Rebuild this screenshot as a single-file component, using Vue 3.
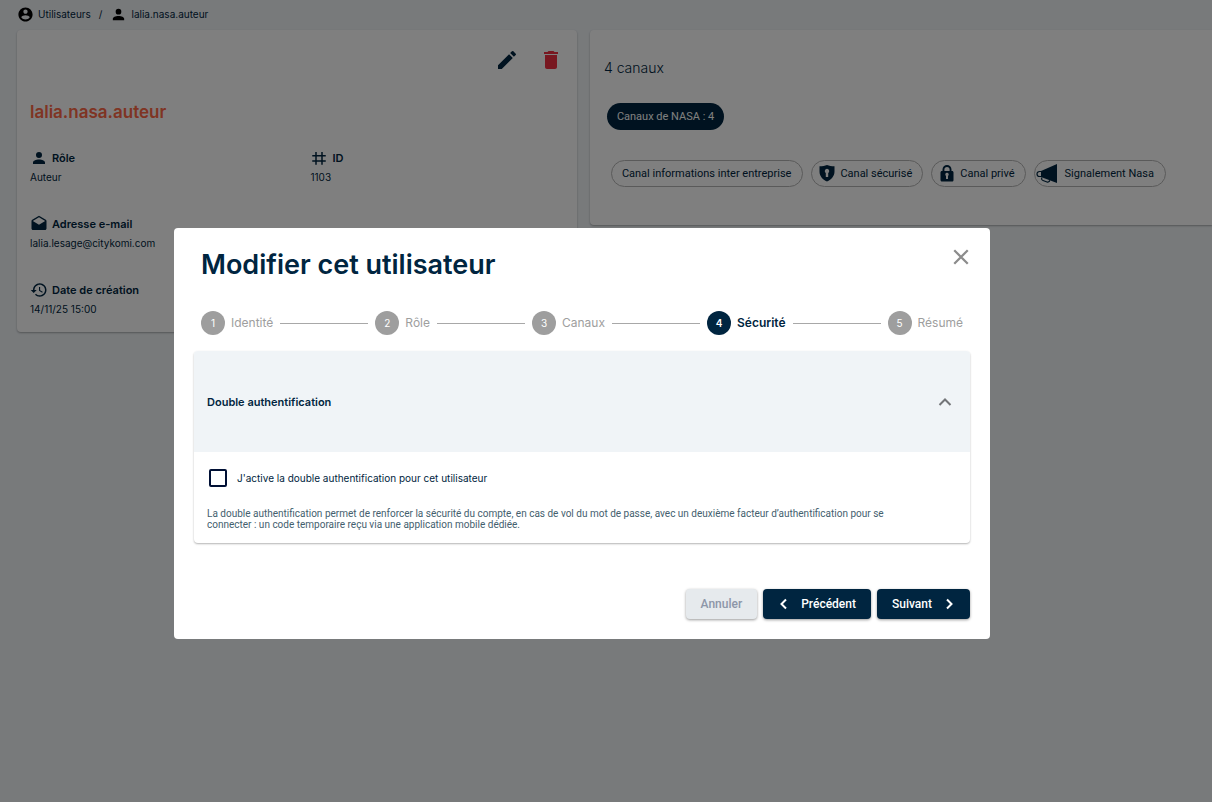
<template>
  <div class="page">
    <nav class="breadcrumb" aria-label="Fil d'Ariane">
      <a href="#utilisateurs" class="crumb">
        <svg class="crumb-icon" viewBox="0 0 24 24" aria-hidden="true"><path :d="icons.accountCircle" /></svg>
        Utilisateurs
      </a>
      <span class="crumb-separator">/</span>
      <a href="#utilisateur" class="crumb">
        <svg class="crumb-icon" viewBox="0 0 24 24" aria-hidden="true"><path :d="icons.account" /></svg>
        lalia.nasa.auteur
      </a>
    </nav>

    <main class="columns">
      <!-- Fiche utilisateur -->
      <section class="card user-card">
        <div class="user-actions">
          <button type="button" class="icon-button" aria-label="Modifier">
            <svg viewBox="0 0 24 24"><path :d="icons.edit" /></svg>
          </button>
          <button type="button" class="icon-button danger" aria-label="Supprimer">
            <svg viewBox="0 0 24 24"><path :d="icons.trash" /></svg>
          </button>
        </div>
        <h2 class="user-name">lalia.nasa.auteur</h2>
        <dl class="user-infos">
          <div v-for="info in infos" :key="info.label" class="info" :class="{ wide: info.wide }">
            <dt>
              <svg class="info-icon" viewBox="0 0 24 24" aria-hidden="true"><path :d="icons[info.icon]" /></svg>
              {{ info.label }}
            </dt>
            <dd>{{ info.value }}</dd>
          </div>
        </dl>
      </section>

      <!-- Canaux de l'utilisateur -->
      <section class="card channels-card">
        <h3 class="channels-title">4 canaux</h3>
        <button type="button" class="chip chip-dark">Canaux de NASA : 4</button>
        <ul class="channels">
          <li class="chip">Canal informations inter entreprise</li>
          <li class="chip with-icon">
            <svg class="chip-icon" viewBox="0 0 16 18" aria-hidden="true">
              <path fill-rule="evenodd" d="M8 0c2 .9 4.500 1.200 7.500 1.200v5.300c0 4.500-3 8-7.500 10-4.500-2-7.500-5.500-7.500-10V1.200C3.500 1.200 6 .9 8 0zM8 3.800a2.300 2.300 0 0 0-1.200 4.200V12h2.400V8A2.300 2.300 0 0 0 8 3.800z" />
            </svg>
            Canal sécurisé
          </li>
          <li class="chip with-icon">
            <svg class="chip-icon" viewBox="0 0 16 18" aria-hidden="true">
              <path fill-rule="evenodd" d="M3.500 6V4.500a4.500 4.500 0 0 1 9 0V6h.5c1 0 1.500.6 1.500 1.500V15c0 1-.6 1.500-1.500 1.500H3c-1 0-1.500-.6-1.500-1.500V7.500C1.500 6.600 2 6 3 6zM5.400 6h5.200V4.500a2.600 2.600 0 0 0-5.200 0zM8 7.800a1.700 1.700 0 0 0-1 3.100V14h2v-3.100a1.700 1.700 0 0 0-1-3.100z" />
            </svg>
            Canal privé
          </li>
          <li class="chip with-megaphone">
            <svg class="megaphone" viewBox="0 0 22 20" aria-hidden="true">
              <path d="M21 0v19L5 13V7z" />
              <path class="outline" d="M5 7.500H3.500a2.500 2.500 0 0 0 0 5H5M6 13.500c-.8 1.500-.3 2.500 1 3l4 1.500c1.300.5 2.300-.3 2.800-1.800" />
            </svg>
            Signalement Nasa
          </li>
        </ul>
      </section>
    </main>

    <div class="overlay">
      <div class="modal" role="dialog" aria-modal="true" aria-labelledby="modal-title">
        <header class="modal-header">
          <h1 id="modal-title">Modifier cet utilisateur</h1>
          <button type="button" class="close" aria-label="Fermer">
            <svg viewBox="0 0 16 16"><path d="M2 2l12 12M14 2L2 14" /></svg>
          </button>
        </header>

        <ol class="stepper">
          <template v-for="(step, index) in steps" :key="step">
            <li v-if="index > 0" class="step-line" aria-hidden="true"></li>
            <li class="step" :class="{ active: index === currentStep }">
              <span class="step-number">{{ index + 1 }}</span>
              <span class="step-label">{{ step }}</span>
            </li>
          </template>
        </ol>

        <section class="panel">
          <button type="button" class="panel-header" :aria-expanded="panelOpen" @click="panelOpen = !panelOpen">
            Double authentification
            <svg class="chevron" :class="{ closed: !panelOpen }" viewBox="0 0 14 14" aria-hidden="true"><path d="M1.500 10L7 4.500l5.500 5.500" /></svg>
          </button>
          <div v-if="panelOpen" class="panel-body">
            <label class="check" for="double-auth">
              <input id="double-auth" v-model="doubleAuth" type="checkbox">
              J'active la double authentification pour cet utilisateur
            </label>
            <p class="hint">
              La double authentification permet de renforcer la sécurité du compte, en cas de vol du mot de passe, avec un deuxième facteur d’authentification pour se connecter : un code temporaire reçu via une application mobile dédiée.
            </p>
          </div>
        </section>

        <footer class="modal-footer">
          <button type="button" class="btn btn-cancel">Annuler</button>
          <button type="button" class="btn btn-previous" @click="previousStep">
            <svg viewBox="0 0 12 12" aria-hidden="true"><path d="M8 1.500L3.500 6 8 10.500" /></svg>
            Précédent
          </button>
          <button type="button" class="btn btn-next" @click="nextStep">
            Suivant
            <svg viewBox="0 0 12 12" aria-hidden="true"><path d="M4 1.500L8.500 6 4 10.500" /></svg>
          </button>
        </footer>
      </div>
    </div>
  </div>
</template>

<script setup>
import { ref } from 'vue'

const icons = {
  account: 'M12 4a4 4 0 1 1 0 8 4 4 0 0 1 0-8zm0 10c4.420 0 8 1.790 8 4v2H4v-2c0-2.210 3.580-4 8-4z',
  accountCircle: 'M12 2C6.480 2 2 6.480 2 12s4.480 10 10 10 10-4.480 10-10S17.520 2 12 2zm0 3c1.660 0 3 1.340 3 3s-1.340 3-3 3-3-1.340-3-3 1.340-3 3-3zm0 14.200c-2.500 0-4.710-1.280-6-3.220.030-1.990 4-3.080 6-3.080 1.990 0 5.970 1.090 6 3.080-1.290 1.940-3.500 3.220-6 3.220z',
  edit: 'M3 17.250V21h3.750L17.810 9.940l-3.750-3.750L3 17.250zM20.710 7.040a1 1 0 0 0 0-1.410l-2.340-2.340a1 1 0 0 0-1.410 0l-1.830 1.830 3.750 3.750 1.830-1.830z',
  trash: 'M6 19c0 1.100.9 2 2 2h8c1.100 0 2-.9 2-2V7H6v12zM19 4h-3.500l-1-1h-5l-1 1H5v2h14V4z',
  mail: 'M22 8c0-.7-.4-1.350-.95-1.700L12 1 2.950 6.300C2.380 6.650 2 7.280 2 8v10c0 1.100.9 2 2 2h16c1.100 0 2-.9 2-2V8zM12 13L3.740 7.840 12 3l8.260 4.840L12 13z',
  history: 'M13 3c-4.970 0-9 4.030-9 9H1l3.890 3.890.07.14L9 12H6c0-3.870 3.130-7 7-7s7 3.130 7 7-3.130 7-7 7c-1.930 0-3.680-.79-4.940-2.060l-1.420 1.420C8.270 19.990 10.510 21 13 21c4.970 0 9-4.030 9-9s-4.030-9-9-9zm-1 5v5l4.280 2.540.72-1.210-3.500-2.080V8H12z',
  hash: 'M7 4h2v4h6V4h2v4h4v2h-4v5h4v2h-4v4h-2v-4H9v4H7v-4H3v-2h4v-5H3V8h4V4zm2 6v5h6v-5H9z'
}

const infos = [
  { label: 'Rôle', value: 'Auteur', icon: 'account' },
  { label: 'ID', value: '1103', icon: 'hash' },
  { label: 'Adresse e-mail', value: 'lalia.lesage@citykomi.com', icon: 'mail', wide: true },
  { label: 'Date de création', value: '14/11/25 15:00', icon: 'history', wide: true }
]

const steps = ['Identité', 'Rôle', 'Canaux', 'Sécurité', 'Résumé']
const currentStep = ref(3)
const panelOpen = ref(true)
const doubleAuth = ref(false)

function previousStep() {
  if (currentStep.value > 0) {
    currentStep.value--
  }
}

function nextStep() {
  if (currentStep.value < steps.length - 1) {
    currentStep.value++
  }
}
</script>

<style>
body {
  background-color: #f0f4f7;
}
</style>

<style scoped>
* {
  box-sizing: border-box;
}

.page {
  min-height: 100vh;
  overflow: hidden;
  background-color: #f0f4f7;
  color: #002540;
  font-family: Inter, "Liberation Sans", sans-serif;
  font-size: 11px;
}

h1, h2, h3, p, dl, dd, ul, ol {
  margin: 0;
  padding: 0;
  list-style: none;
}

button {
  border: none;
  cursor: pointer;
  font-family: inherit;
}

.breadcrumb {
  display: flex;
  align-items: center;
  gap: 8px;
  height: 30px;
  padding: 0 17px 2px;
  font-size: 10px;
}

.crumb {
  display: flex;
  align-items: center;
  gap: 4px;
  color: inherit;
  text-decoration: none;
}

.crumb-icon {
  width: 17px;
  height: 17px;
  fill: #000;
}

.columns {
  display: grid;
  grid-template-columns: minmax(0, 9fr) minmax(0, 10fr);
  align-items: start;
  gap: 13px;
  padding-left: 17px;
}

.card {
  background-color: #fff;
  border-radius: 4px;
  box-shadow: 0 1px 2px rgba(0, 0, 0, 0.3);
}

.user-card {
  padding: 18px 14px 14px 13px;
}

.user-actions {
  display: flex;
  justify-content: flex-end;
  gap: 20px;
}

.icon-button {
  width: 24px;
  height: 24px;
  padding: 0;
  background: none;
  fill: #002540;
}

.danger {
  fill: #f02e40;
}

.user-name {
  margin-top: 28px;
  color: #ff6846;
  font-size: 17px;
  font-weight: 600;
  line-height: 24px;
}

.user-infos {
  display: grid;
  grid-template-columns: 1fr 1fr;
  gap: 28px;
  margin-top: 24px;
}

.wide {
  grid-column: 1 / -1;
}

.info dt {
  display: flex;
  align-items: center;
  gap: 4px;
  height: 20px;
  font-weight: 600;
}

.info dd {
  font-size: 10px;
  line-height: 18px;
}

.info-icon {
  width: 18px;
  height: 18px;
  fill: #002540;
}

.channels-card {
  padding: 28px 14px 38px;
  border-radius: 4px 0 0 4px;
}

.channels-title {
  font-size: 14px;
  font-weight: 300;
  line-height: 20px;
}

.chip {
  display: flex;
  align-items: center;
  height: 27px;
  padding: 0 11px 0 10px;
  border: 1px solid #b4b4b4;
  border-radius: 14px;
  font-family: Roboto, sans-serif;
  font-size: 11px;
  white-space: nowrap;
}

.chip-dark {
  margin: 25px 0 0 3px;
  border: none;
  padding: 0 10px;
  background-color: #002540;
  color: #fff;
}

.channels {
  display: flex;
  flex-wrap: wrap;
  gap: 8px;
  margin: 30px 0 0 7px;
}

.with-icon {
  gap: 5px;
  padding: 0 10px 0 7px;
}

.chip-icon {
  width: 16px;
  height: 18px;
  fill: #002540;
}

.with-megaphone {
  gap: 7px;
  padding: 0 11px 0 1px;
}

.megaphone {
  width: 22px;
  height: 20px;
  fill: #002540;
}

.outline {
  fill: none;
  stroke: #002540;
  stroke-width: 1.2;
}

/* Fenêtre modale */
.overlay {
  position: fixed;
  inset: 0;
  display: flex;
  align-items: center;
  justify-content: center;
  padding: 65px 48px 0 0;
  background-color: rgba(0, 0, 0, 0.5);
}

.modal {
  width: 72%;
  max-width: 816px;
  padding: 20px;
  border-radius: 4px;
  background-color: #fff;
}

.modal-header {
  display: flex;
  justify-content: space-between;
  align-items: flex-start;
  padding: 0 0 0 7px;
}

.modal-header h1 {
  font-size: 27px;
  font-weight: 600;
  line-height: 34px;
}

.close {
  width: 18px;
  height: 18px;
  padding: 0;
  background: none;
}

.close svg {
  display: block;
  fill: none;
  stroke: #8c8c8c;
  stroke-width: 2;
}

.stepper {
  display: flex;
  align-items: center;
  gap: 7px;
  margin-top: 29px;
  padding: 0 7px;
}

.step {
  display: flex;
  align-items: center;
  gap: 6px;
  color: #9e9e9e;
  font-size: 12px;
  line-height: 14px;
}

.step-number {
  display: flex;
  align-items: center;
  justify-content: center;
  width: 24px;
  height: 24px;
  border-radius: 50%;
  background-color: #9e9e9e;
  color: #fff;
  font-size: 10px;
}

.active {
  color: #002540;
  font-weight: 600;
}

.active .step-number {
  background-color: #002540;
}

.step-line {
  flex: 1;
  height: 1px;
  background-color: #a8a8a8;
}

.panel {
  overflow: hidden;
  margin-top: 16px;
  border-radius: 4px;
  box-shadow: 0 1px 2px rgba(0, 0, 0, 0.3);
}

.panel-header {
  display: flex;
  align-items: center;
  justify-content: space-between;
  width: 100%;
  height: 101px;
  padding: 0 18px 0 13px;
  background-color: #f0f4f7;
  color: #002540;
  font-size: 11px;
  font-weight: 600;
}

.chevron {
  width: 14px;
  height: 14px;
  fill: none;
  stroke: #737578;
  stroke-width: 2;
}

.closed {
  transform: rotate(180deg);
}

.panel-body {
  padding: 16px 80px 13px 13px;
}

.check {
  display: flex;
  align-items: center;
  gap: 10px;
  height: 20px;
  font-size: 10px;
}

.check input {
  appearance: none;
  width: 18px;
  height: 18px;
  margin: 0 0 0 2px;
  border: 2px solid #001035;
  border-radius: 2px;
}

.check input:checked {
  background-color: #001035;
}

.hint {
  margin-top: 20px;
  color: #44606e;
  font-family: Roboto, sans-serif;
  font-size: 10px;
  line-height: 11px;
}

.modal-footer {
  display: flex;
  justify-content: flex-end;
  gap: 6px;
  margin-top: 46px;
}

.btn {
  display: flex;
  align-items: center;
  gap: 11px;
  height: 30px;
  padding: 0 15px;
  border-radius: 4px;
  background-color: #002540;
  box-shadow: 0 1px 3px rgba(0, 0, 0, 0.4);
  color: #fff;
  font-family: Roboto, sans-serif;
  font-size: 12px;
  font-weight: 500;
}

.btn svg {
  width: 12px;
  height: 12px;
  fill: none;
  stroke: #fff;
  stroke-width: 2;
}

.btn-cancel {
  background-color: #e6eaed;
  color: #8d96a8;
}
</style>
